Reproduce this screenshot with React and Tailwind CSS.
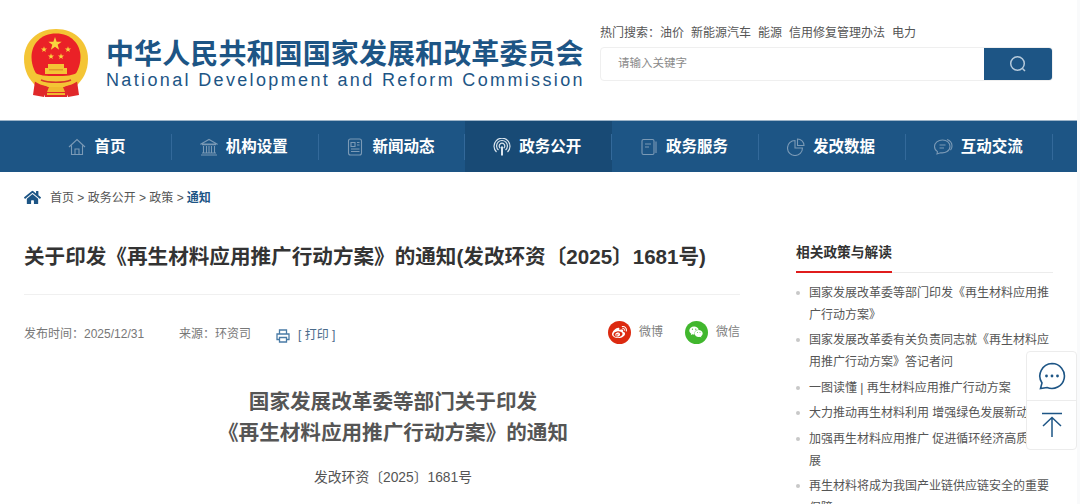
import React from "react";
import { FaHome, FaWeibo, FaWeixin } from "react-icons/fa";

const font = { fontFamily: '"Liberation Sans", "Noto Sans CJK SC", sans-serif' };

const IconHome = () => (
  <svg width="18" height="18" viewBox="0 0 18 18" fill="none" stroke="currentColor" strokeWidth="1.1">
    <path d="M1 9 9 1.5 17 9M3.5 7.5V16.5H14.5V7.5M7 16.5V11H11V16.5" />
  </svg>
);
const IconBank = () => (
  <svg width="18" height="18" viewBox="0 0 18 18" fill="none" stroke="currentColor" strokeWidth="1.1">
    <path d="M1 6 9 1.5 17 6ZM2 6.8H16M3.5 8V14.5M6.5 8V14.5M9 8V14.5M11.5 8V14.5M14.5 8V14.5M2 15H16M1 17H17" />
  </svg>
);
const IconNews = () => (
  <svg width="18" height="18" viewBox="0 0 18 18" fill="none" stroke="currentColor" strokeWidth="1.1">
    <rect x="2.5" y="1" width="13" height="16" rx="2" />
    <path d="M5 4.5H9V8.5H5ZM11 4.5H13.5M11 7H13.5M5 11H13.5M5 13.5H13.5" />
  </svg>
);
const IconSignal = () => (
  <svg width="18" height="18" viewBox="0 0 18 18" fill="none" stroke="#dbe5ee" strokeWidth="1.2">
    <path d="M3.5 14A8 8 0 1 1 14.5 14M5.5 12A5.4 5.4 0 1 1 12.500 12M7.300 10.200A2.800 2.800 0 1 1 10.700 10.200" />
    <path d="M9 8.500V17.500" strokeWidth="2" />
  </svg>
);
const IconDoc = () => (
  <svg width="18" height="18" viewBox="0 0 18 18" fill="none" stroke="currentColor" strokeWidth="1.1">
    <rect x="2" y="1.500" width="12" height="15" rx="1.500" />
    <path d="M5 6H11M5 9H9M16 3.500V15" />
  </svg>
);
const IconPie = () => (
  <svg width="18" height="18" viewBox="0 0 18 18" fill="none" stroke="currentColor" strokeWidth="1.1">
    <path d="M8 2.500A7.500 7.500 0 1 0 15.500 10H8Z" />
    <path d="M10.500 1A6.500 6.500 0 0 1 17 7.500H10.500Z" />
  </svg>
);
const IconChat = () => (
  <svg width="20" height="18" viewBox="0 0 20 18" fill="none" stroke="currentColor" strokeWidth="1.1">
    <path d="M9.500 2C5 2 1.500 4.800 1.500 8.500C1.500 10.700 2.600 12.400 4.500 13.600L4 16L7.500 14.800C12.500 15.500 17 12.800 17 8.500C17 4.800 14 2 9.500 2Z" />
    <path d="M6.500 7H12.500M6.500 10H11M14 1.500C17 2.500 19 5 19 8C19 9.500 18.500 11 17.500 12.200" />
  </svg>
);

const nav = [
  { name: "首页", icon: <IconHome /> },
  { name: "机构设置", icon: <IconBank /> },
  { name: "新闻动态", icon: <IconNews /> },
  { name: "政务公开", icon: <IconSignal />, active: true },
  { name: "政务服务", icon: <IconDoc /> },
  { name: "发改数据", icon: <IconPie /> },
  { name: "互动交流", icon: <IconChat /> },
];

const hot = ["油价", "新能源汽车", "能源", "信用修复管理办法", "电力"];

const related = [
  "国家发展改革委等部门印发《再生材料应用推广行动方案》",
  "国家发展改革委有关负责同志就《再生材料应用推广行动方案》答记者问",
  "一图读懂 | 再生材料应用推广行动方案",
  "大力推动再生材料利用 增强绿色发展新动能",
  "加强再生材料应用推广 促进循环经济高质量发展",
  "再生材料将成为我国产业链供应链安全的重要保障",
];

const Star = ({ x, y, r }) => {
  const pts = [];
  for (let i = 0; i < 10; i++) {
    const a = (Math.PI / 5) * i - Math.PI / 2;
    const d = i % 2 === 0 ? r : r * 0.4;
    pts.push(`${x + d * Math.cos(a)},${y + d * Math.sin(a)}`);
  }
  return <polygon points={pts.join(" ")} fill="#f9d53e" />;
};

const Emblem = () => (
  <svg width="64" height="69" viewBox="0 0 64 69">
    {/* wreath ring */}
    <path d="M32 0C13 0 0 13 0 30C0 42 5 51 13 58H51C59 51 64 42 64 30C64 13 51 0 32 0Z" fill="#f4c535" />
    <path d="M32 4.500C17 4.500 7.500 15 7.500 28C7.500 38 12 46 17 50H47C52 46 56.500 38 56.500 28C56.500 15 47 4.500 32 4.500Z" fill="#ea2127" />
    {/* ribbons */}
    <path d="M11 52 9 66 20 68 24 58ZM53 52 55 66 44 68 40 58Z" fill="#e0282a" />
    <Star x={31} y={15} r={7} />
    <Star x={20} y={20.500} r={3.200} />
    <Star x={27} y={27.500} r={3.200} />
    <Star x={37} y={27.500} r={3.200} />
    <Star x={44} y={20.500} r={3.200} />
    {/* gate */}
    <path d="M24 35H40V39H43V45H21V39H24Z" fill="#f4c535" />
    <path d="M25 40H39V41.500H25Z" fill="#e2992a" />
    {/* lower wreath */}
    <path d="M8 42C15 47 22 47 32 47C42 47 49 47 56 42L58 48C51 56 44 57 38 57H26C20 57 13 56 6 48Z" fill="#f4c535" />
    <path d="M17 51C24 54 40 54 47 51" fill="none" stroke="#d8362a" strokeWidth="1.600" />
    <path d="M21 58H43V68H21Z" fill="#e0282a" />
    <path d="M25 58H39L41 63H23ZM23 64H41V66H23Z" fill="#f0b92e" />
  </svg>
);

const App = () => {
  return (
    <div className="flex h-[504px] w-full overflow-hidden bg-[#f9fafb] text-[#333]" style={font}>
      <div className="h-full w-[1077px] shrink-0 bg-white">
        <header className="flex h-[120px] justify-between pl-[24px] pr-[24px]">
          <div className="flex items-center pt-[6px]">
            <Emblem />
            <div className="ml-[18px] mt-[6px] w-[480px] text-[#1d5585]">
              <p className="whitespace-nowrap text-[28px] leading-[28px] font-bold tracking-[0.100px]">
                中华人民共和国国家发展和改革委员会
              </p>
              <p className="whitespace-nowrap text-[18px] leading-[22px] tracking-[2.350px]">
                National Development and Reform Commission
              </p>
            </div>
          </div>
          <div className="w-[453px] pt-[24px]">
            <div className="flex h-[16px] translate-y-[1px] items-center gap-[7px] text-[12px] text-[#555]">
              <span className="mr-[-7px]">热门搜索：</span>
              {hot.map((item) => (
                <span key={item}>{item}</span>
              ))}
            </div>
            <div className="mt-[7px] flex h-[34px] overflow-hidden rounded-[4px] border border-[#efefef]">
              <div className="flex flex-1 items-center pl-[17px] text-[11.500px] text-[#8a8a8a]">请输入关键字</div>
              <div className="flex w-[68px] items-center justify-center bg-[#1d5585]">
                <svg width="18" height="18" viewBox="0 0 18 18" fill="none" stroke="#b6cadb" strokeWidth="1.500">
                  <circle cx="8.500" cy="8.500" r="6.800" />
                  <path d="M13.500 13.500 16 16" />
                </svg>
              </div>
            </div>
          </div>
        </header>

        <nav className="h-[52px] border-t border-[#9db4c8] bg-[#1d5585] pl-[25px]">
          <ul className="flex h-full">
            {nav.map((item) => (
              <li
                key={item.name}
                className={`flex h-full w-[146.800px] items-center justify-center ${item.active ? "bg-[#184a75]" : ""}`}
              >
                <div className="flex h-[26px] w-full items-center justify-center gap-[8px] border-r border-[#33699a] pr-[2px] text-[#7b9ab6]">
                  {item.icon}
                  <span className="text-[15.500px] font-bold text-white">{item.name}</span>
                </div>
              </li>
            ))}
          </ul>
        </nav>

        <div className="flex h-[51px] items-center pl-[24px] text-[12px] text-[#555]">
          <FaHome className="text-[17px] text-[#1d5585]" />
          <span className="ml-[9px]">首页 &gt; 政务公开 &gt; 政策 &gt; </span>
          <span className="ml-[3px] font-bold text-[#1d5585]">通知</span>
        </div>

        <main className="flex justify-between pl-[24px] pr-[24px]">
          <div className="w-[716px]">
            <h1 className="mt-[19px] whitespace-nowrap text-[20.600px] leading-[30px] font-bold text-[#333]">
              关于印发《再生材料应用推广行动方案》的通知(发改环资〔2025〕1681号)
            </h1>
            <div className="mt-[22px] border-t border-[#f0f0f0]" />
            <div className="mt-[24px] flex h-[28px] items-center justify-between text-[12px] text-[#777]">
              <div className="flex items-center pt-[2px]">
                <span>发布时间：2025/12/31</span>
                <span className="ml-[35px]">来源：环资司</span>
                <svg className="ml-[25px] mt-[3px]" width="14" height="14" viewBox="0 0 14 14" fill="none" stroke="#4a7ba6" strokeWidth="1.300">
                  <path d="M3.500 5V1H10.500V5M3.500 10.500H1V5H13V10.500H10.500" />
                  <path d="M3.500 8.500H10.500V13H3.500Z" />
                </svg>
                <span className="ml-[8px] mt-[1px] text-[#4a6a8a]">[ 打印 ]</span>
              </div>
              <div className="-mt-[2px] flex items-center">
                <span className="flex h-[23px] w-[23px] items-center justify-center rounded-full bg-[#dc2a10] text-[15px] text-white">
                  <FaWeibo />
                </span>
                <span className="ml-[8px] text-[#808080]">微博</span>
                <span className="ml-[22px] flex h-[23px] w-[23px] items-center justify-center rounded-full bg-[#41b72e] text-[14px] text-white">
                  <FaWeixin />
                </span>
                <span className="ml-[8px] text-[#808080]">微信</span>
              </div>
            </div>
            <div className="mt-[38.500px] pl-[22px] text-center text-[20.600px] leading-[31px] font-bold text-[#555]">
              <p>国家发展改革委等部门关于印发</p>
              <p>《再生材料应用推广行动方案》的通知</p>
            </div>
            <p className="mt-[18.500px] pl-[22px] text-center text-[13.800px] leading-[24px] text-[#555]">发改环资〔2025〕1681号</p>
          </div>

          <aside className="w-[257px]">
            <div className="mt-[13px] border-b border-[#ececec]">
              <h2 className="-mb-px inline-block h-[37px] border-b-2 border-[#e01c1c] text-[13.700px] leading-[34px] font-bold text-[#333]">
                相关政策与解读
              </h2>
            </div>
            <ul className="mt-[8.500px] text-[12px] leading-[22px] text-[#555]">
              {related.map((item) => (
                <li key={item} className="relative mb-[3.500px] pl-[13px]">
                  <span className="absolute left-0 top-[9px] h-[4px] w-[4px] rounded-full bg-[#c8c8c8]" />
                  {item}
                </li>
              ))}
            </ul>
          </aside>
        </main>
      </div>

      <div className="fixed left-[1026px] top-[351px] w-[51px] rounded-[4px] border border-[#ececec] bg-white">
        <div className="flex h-[49px] items-center justify-center border-b border-[#ececec]">
          <svg width="28" height="28" viewBox="0 0 28 28" fill="none" stroke="#1d5585" strokeWidth="1.600">
            <path d="M14 1.500A12.500 12.500 0 1 1 9 25.500L2.500 26.500L4 21A12.500 12.500 0 0 1 14 1.500Z" />
            <circle cx="8.500" cy="14" r="1.400" fill="#1d5585" stroke="none" />
            <circle cx="14" cy="14" r="1.400" fill="#1d5585" stroke="none" />
            <circle cx="19.500" cy="14" r="1.400" fill="#1d5585" stroke="none" />
          </svg>
        </div>
        <div className="flex h-[48px] items-center justify-center">
          <svg width="22" height="26" viewBox="0 0 22 26" fill="none" stroke="#1d5585" strokeWidth="1.500">
            <path d="M1 1.500H21M11 25V5.500M2 14 11 5.500 20 14" />
          </svg>
        </div>
      </div>
    </div>
  );
};

export default App;
